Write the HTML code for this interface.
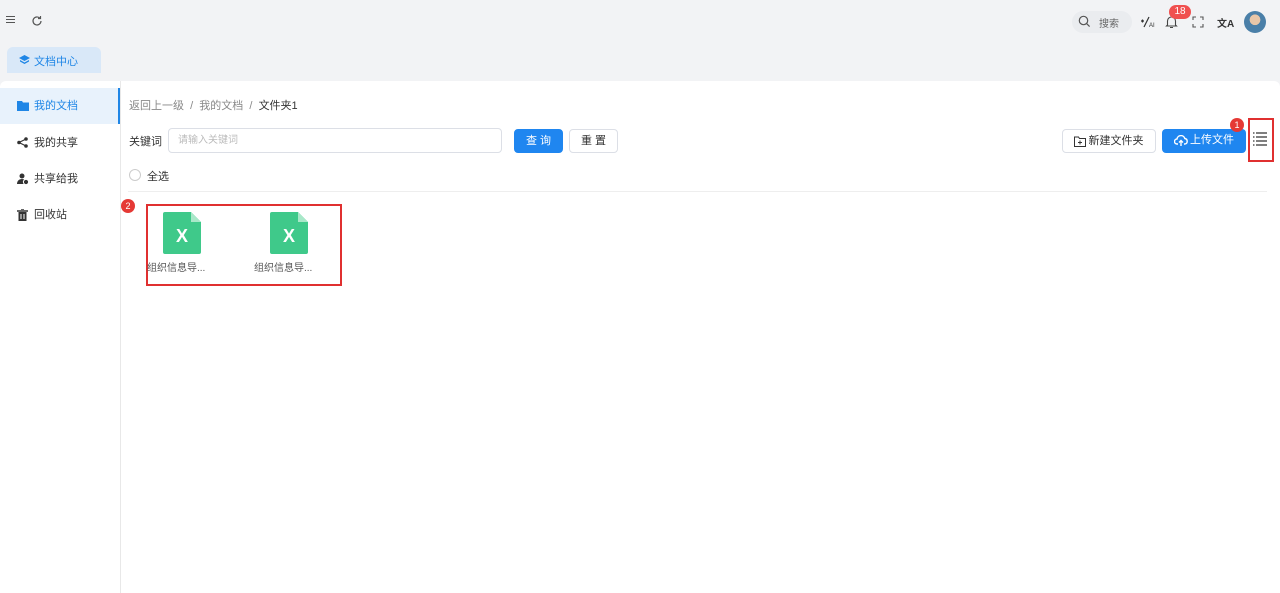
<!DOCTYPE html>
<html><head><meta charset="utf-8"><style>
*{margin:0;padding:0;box-sizing:border-box}
body{width:1280px;height:593px;background:#f2f3f5;font-family:"Liberation Sans","Noto Sans CJK SC",sans-serif;font-size:12px;color:#333;position:relative;overflow:hidden}
.abs{position:absolute}
.panel{position:absolute;left:0;top:81px;width:1280px;height:512px;background:#fff;border-radius:6px 6px 0 0}
.side{position:absolute;left:0;top:81px;width:121px;height:512px;border-right:1px solid #e8e8e8}
.item{position:absolute;left:0;width:120px;height:36px;line-height:36px;padding-left:34px;font-size:11px;color:#333}
.item svg{position:absolute;left:17px;top:12px}
.btn{position:absolute;height:24px;line-height:22px;border-radius:4px;font-size:11px;text-align:center}
.fname{position:absolute;font-size:10px;color:#555;white-space:nowrap}
</style></head><body>
<div class="abs" style="left:6px;top:16px;width:9px;height:1px;background:#555;box-shadow:0 3px 0 #555,0 6px 0 #555"></div>
<svg class="abs" style="left:31px;top:15px" width="12" height="12" viewBox="0 0 12 12"><path d="M10 6a4 4 0 1 1-1.2-2.9M9.5 1v2.5H7" fill="none" stroke="#555" stroke-width="1.2"/></svg>
<div class="abs" style="left:1072px;top:11px;width:60px;height:22px;border-radius:11px;background:#eaecef"></div>
<svg class="abs" style="left:1078px;top:15px" width="13" height="13" viewBox="0 0 13 13"><circle cx="5.5" cy="5.5" r="4.2" fill="none" stroke="#555" stroke-width="1.2"/><path d="M8.6 8.6l3 3" stroke="#555" stroke-width="1.2"/></svg>
<div class="abs" style="left:1099px;top:15px;font-size:10px;color:#666">搜索</div>
<svg class="abs" style="left:1140px;top:15px" width="16" height="14" viewBox="0 0 16 14"><path d="M1 6h3M2.5 4.5v3M9 2L4 12" stroke="#333" stroke-width="1.2" fill="none"/><text x="9" y="12" font-family="Liberation Sans" font-size="6" fill="#333">AI</text></svg>
<svg class="abs" style="left:1165px;top:15px" width="13" height="14" viewBox="0 0 13 14"><path d="M2.5 10V6a4 4 0 0 1 8 0v4l1 1H1.5z M5 12.5h3" fill="none" stroke="#444" stroke-width="1.1"/></svg>
<div class="abs" style="left:1169px;top:5px;width:22px;height:14px;border-radius:7px;background:#f0504f;color:#fff;font-size:10px;text-align:center;line-height:14px">18</div>
<svg class="abs" style="left:1192px;top:16px" width="12" height="12" viewBox="0 0 12 12"><path d="M1 4V1h3M8 1h3v3M11 8v3H8M4 11H1V8" fill="none" stroke="#555" stroke-width="1.1"/></svg>
<div class="abs" style="left:1217px;top:15px;font-size:10px;font-weight:bold;color:#333">文A</div>
<div class="abs" style="left:1244px;top:11px;width:22px;height:22px;border-radius:50%;background:radial-gradient(circle at 50% 40%,#e8c6a8 0 30%,#4a7fa8 32%)"></div>
<div class="abs" style="left:7px;top:47px;width:94px;height:26px;background:#d9e8f8;border-radius:6px 6px 0 0"></div>
<svg class="abs" style="left:19px;top:55px" width="11" height="10" viewBox="0 0 11 10"><path d="M5.5 0L11 3 5.5 6 0 3z" fill="#1f86e6"/><path d="M1 5l4.5 2.5L10 5v1.5L5.5 9 1 6.5z" fill="#1f86e6"/></svg>
<div class="abs" style="left:34px;top:53px;font-size:11px;color:#1f86e6">文档中心</div>
<div class="panel"></div>
<div class="side">
<div class="item" style="top:7px;background:#e8f2fc;color:#1f86e6;border-right:2px solid #1f86e6"><svg width="12" height="11" viewBox="0 0 12 11"><path d="M0 1h5l1 1.5h6V11H0z" fill="#1f86e6"/></svg>我的文档</div>
<div class="item" style="top:44px"><svg width="11" height="11" viewBox="0 0 11 11"><circle cx="2" cy="5.5" r="1.8" fill="#333"/><circle cx="9" cy="2" r="1.8" fill="#333"/><circle cx="9" cy="9" r="1.8" fill="#333"/><path d="M2 5.5L9 2M2 5.5L9 9" stroke="#333" stroke-width="1.2"/></svg>我的共享</div>
<div class="item" style="top:80px"><svg width="12" height="12" viewBox="0 0 12 12"><circle cx="5" cy="3" r="2.5" fill="#333"/><path d="M0 11c0-3 2-5 5-5s5 2 5 5z" fill="#333"/><circle cx="9" cy="9" r="2.6" fill="#333" stroke="#fff"/></svg>共享给我</div>
<div class="item" style="top:116px"><svg width="11" height="12" viewBox="0 0 11 12"><path d="M0 2h11M4 0h3" stroke="#333" stroke-width="1.4"/><path d="M1.5 3h8v9h-8z" fill="#333"/><path d="M4 5v5M7 5v5" stroke="#fff"/></svg>回收站</div>
</div>
<div class="abs" style="left:129px;top:97px;font-size:11px;color:#888">返回上一级 &nbsp;/&nbsp; 我的文档 &nbsp;/&nbsp; <span style="color:#333">文件夹1</span></div>
<div class="abs" style="left:129px;top:133px;font-size:11px">关键词</div>
<div class="abs" style="left:168px;top:128px;width:334px;height:25px;border:1px solid #dcdfe6;border-radius:4px;padding-left:9px;line-height:23px;font-size:10px;color:#bbb">请输入关键词</div>
<div class="btn" style="left:514px;top:129px;width:49px;background:#1f86f0;color:#fff;border:1px solid #1f86f0">查 询</div>
<div class="btn" style="left:569px;top:129px;width:49px;border:1px solid #dcdfe6;color:#333">重 置</div>
<div class="btn" style="left:1062px;top:129px;width:94px;border:1px solid #dcdfe6;color:#333;padding-left:14px">新建文件夹<svg style="position:absolute;left:11px;top:6px" width="12" height="11" viewBox="0 0 12 11"><path d="M.5 1h4l1 1.5h6v8H.5z M6 4.5v4M4 6.5h4" fill="none" stroke="#333"/></svg></div>
<div class="btn" style="left:1162px;top:129px;width:84px;background:#1f86f0;color:#fff;padding-left:16px">上传文件<svg style="position:absolute;left:12px;top:6px" width="14" height="12" viewBox="0 0 14 12"><path d="M4 9H3a2.5 2.5 0 0 1 0-5 4 4 0 0 1 7.8-.5A2.8 2.8 0 0 1 11 9h-1M7 11V6M5 7.5L7 5.5 9 7.5" fill="none" stroke="#fff" stroke-width="1.4"/></svg></div>
<div class="abs" style="left:1230px;top:118px;width:14px;height:14px;border-radius:50%;background:#e53935;color:#fff;font-size:9px;text-align:center;line-height:14px">1</div>
<div class="abs" style="left:1248px;top:118px;width:26px;height:44px;border:2px solid #e03030"></div>
<svg class="abs" style="left:1252px;top:131px" width="16" height="16" viewBox="0 0 16 16"><path d="M1 2h1.5M1 6h1.5M1 10h1.5M1 14h1.5M4 2h11M4 6h11M4 10h11M4 14h11" stroke="#333" stroke-width="1.2"/></svg>
<div class="abs" style="left:129px;top:169px;width:12px;height:12px;border:1px solid #ccc;border-radius:50%"></div>
<div class="abs" style="left:147px;top:168px;font-size:11px">全选</div>
<div class="abs" style="left:128px;top:191px;width:1139px;height:1px;background:#eee"></div>
<div class="abs" style="left:121px;top:199px;width:14px;height:14px;border-radius:50%;background:#e53935;color:#fff;font-size:9px;text-align:center;line-height:14px">2</div>
<div class="abs" style="left:146px;top:204px;width:196px;height:82px;border:2px solid #e03030"></div>
<svg class="abs" style="left:163px;top:212px" width="38" height="42" viewBox="0 0 38 42"><path d="M2 0h26l10 10v30a2 2 0 0 1-2 2H2a2 2 0 0 1-2-2V2a2 2 0 0 1 2-2z" fill="#3fc98a"/><path d="M28 0l10 10h-10z" fill="#a9e8c9"/><text x="19" y="30" font-family="Liberation Sans" font-size="18" font-weight="bold" fill="#fff" text-anchor="middle">X</text></svg>
<svg class="abs" style="left:270px;top:212px" width="38" height="42" viewBox="0 0 38 42"><path d="M2 0h26l10 10v30a2 2 0 0 1-2 2H2a2 2 0 0 1-2-2V2a2 2 0 0 1 2-2z" fill="#3fc98a"/><path d="M28 0l10 10h-10z" fill="#a9e8c9"/><text x="19" y="30" font-family="Liberation Sans" font-size="18" font-weight="bold" fill="#fff" text-anchor="middle">X</text></svg>
<div class="fname" style="left:147px;top:259px">组织信息导...</div>
<div class="fname" style="left:254px;top:259px">组织信息导...</div>
</body></html>
